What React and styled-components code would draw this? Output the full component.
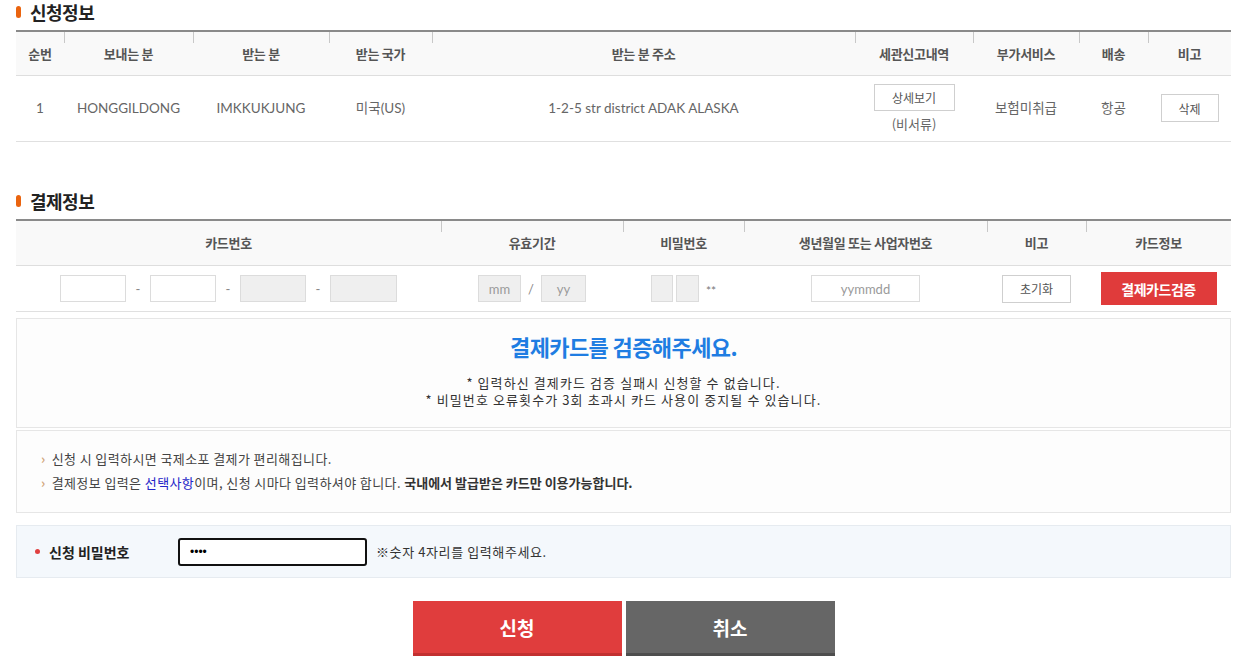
import React from "react";
import styled, { createGlobalStyle } from "styled-components";

const Global = createGlobalStyle`
  html, body { margin: 0; padding: 0; background: #fff; }
  body { font-family: "Lato", "Noto Sans CJK KR", sans-serif; color: #333; }
  * { box-sizing: border-box; }
`;

const Page = styled.div`
  width: 1215px;
  margin-left: 16px;
  padding-bottom: 14px;
`;

const SectionTitle = styled.h2`
  margin: ${(p) => (p.$first ? "0" : "47px")} 0 6px;
  display: flex;
  align-items: center;
  gap: 9px;
  font-family: "Noto Sans CJK KR", sans-serif;
  font-size: 18px;
  font-weight: 700;
  line-height: 24px;
  color: #222;
  letter-spacing: -0.5px;
  &::before {
    content: "";
    display: block;
    width: 5px;
    height: 12px;
    border-radius: 3px;
    background: #ea640f;
  }
`;

const Table = styled.table`
  width: 100%;
  border-collapse: collapse;
  table-layout: fixed;
  border-top: 2px solid #8a8a8a;
`;

const Th = styled.th`
  position: relative;
  height: ${(p) => p.$h || 43}px;
  background: #f9f9f9;
  border-bottom: 1px solid #dedede;
  font-family: "Noto Sans CJK KR", sans-serif;
  font-size: 13px;
  font-weight: 700;
  color: #555;
  text-align: center;
  padding: 0;
  letter-spacing: -0.3px;
  &::before {
    content: "";
    display: ${(p) => (p.$sep ? "block" : "none")};
    position: absolute;
    left: 0;
    top: 0;
    width: 1px;
    height: 11px;
    background: #c8c8c8;
  }
`;

const Td = styled.td`
  height: ${(p) => p.$h || 66}px;
  border-bottom: 1px solid #e0e0e0;
  font-size: 13.5px;
  color: #666;
  text-align: center;
  padding: 0;
  line-height: 18px;
`;

const SmallBtn = styled.button`
  width: ${(p) => p.$w}px;
  height: ${(p) => p.$h || 28}px;
  border: 1px solid #cfcfcf;
  background: #fff;
  font-family: "Noto Sans CJK KR", sans-serif;
  font-size: 12px;
  color: #555;
  padding: 0;
  cursor: pointer;
`;

const DetailCell = styled.div`
  display: flex;
  flex-direction: column;
  align-items: center;
  gap: 4px;
  padding-top: 1px;
`;

const Sub = styled.span`
  font-family: "Noto Sans CJK KR", sans-serif;
  font-size: 13px;
  color: #666;
`;

const InputRow = styled.div`
  display: flex;
  align-items: center;
  justify-content: center;
  gap: ${(p) => p.$gap || 0}px;
`;

const Field = styled.input`
  width: ${(p) => p.$w}px;
  height: 27px;
  border: 1px solid #dcdcdc;
  background: ${(p) => (p.$gray ? "#efefef" : "#fff")};
  font-family: "Lato", "Noto Sans CJK KR", sans-serif;
  font-size: 13px;
  color: #555;
  text-align: center;
  padding: 0;
  outline: none;
  &::placeholder { color: #9a9a9a; }
`;

const Sep = styled.span`
  width: ${(p) => p.$w}px;
  text-align: center;
  font-size: 13px;
  color: #888;
`;

const Stars = styled.span`
  margin-left: 4px;
  font-size: 12px;
  line-height: 12px;
  padding-top: 5px;
  color: #777;
`;

const RedBtn = styled.button`
  width: 116px;
  height: 33px;
  border: none;
  background: #e03b3b;
  color: #fff;
  font-family: "Noto Sans CJK KR", sans-serif;
  font-size: 14px;
  font-weight: 700;
  letter-spacing: -0.5px;
  padding: 0;
`;

const Box = styled.div`
  border: 1px solid #e6e6e6;
  background: #fdfdfd;
  margin-top: ${(p) => p.$mt}px;
  padding: ${(p) => p.$pad};
  text-align: ${(p) => p.$align || "left"};
  font-family: "Noto Sans CJK KR", sans-serif;
`;

const VerifyTitle = styled.div`
  font-size: 22px;
  font-weight: 700;
  line-height: 30px;
  color: #1f7de2;
  letter-spacing: -0.6px;
  margin-bottom: 13px;
`;

const NoteLine = styled.div`
  font-size: 13px;
  line-height: 17px;
  letter-spacing: 1.1px;
  color: #333;
`;

const InfoLine = styled.div`
  display: flex;
  align-items: center;
  gap: 6px;
  font-size: 13px;
  line-height: 24px;
  letter-spacing: 0.4px;
  color: #444;
  &::before {
    content: "›";
    color: #d2a77a;
    font-weight: 700;
    font-size: 13px;
  }
`;

const Link = styled.span`
  color: #2424c8;
`;

const Strong = styled.b`
  color: #333;
  font-weight: 700;
  letter-spacing: 0;
`;

const PwBox = styled.div`
  margin-top: 12px;
  height: 53px;
  border: 1px solid #e6ebf0;
  background: #f4f8fc;
  display: flex;
  align-items: center;
  padding-left: 18px;
  font-family: "Noto Sans CJK KR", sans-serif;
`;

const PwLabel = styled.label`
  width: 143px;
  display: flex;
  align-items: center;
  gap: 9px;
  font-size: 14px;
  font-weight: 700;
  color: #222;
  &::before {
    content: "";
    width: 5px;
    height: 5px;
    border-radius: 50%;
    background: #e04040;
  }
`;

const PwInput = styled.input`
  width: 189px;
  height: 28px;
  border: 2px solid #111;
  border-radius: 3px;
  background: #fff;
  padding: 0 10px;
  font-size: 12px;
  outline: none;
  letter-spacing: 0;
`;

const Hint = styled.span`
  margin-left: 9px;
  font-size: 13px;
  letter-spacing: 0.6px;
  color: #333;
`;

const Actions = styled.div`
  margin-top: 23px;
  display: flex;
  justify-content: center;
  gap: 4px;
`;

const BigBtn = styled.button`
  width: 209px;
  height: 55px;
  border: none;
  border-bottom: 3px solid ${(p) => (p.$red ? "#c23030" : "#4e4e4e")};
  background: ${(p) => (p.$red ? "#e03d3d" : "#666")};
  color: #fff;
  font-family: "Noto Sans CJK KR", sans-serif;
  font-size: 19px;
  font-weight: 700;
  padding: 0;
`;

const apCols = [48, 129, 136, 103, 423, 118, 106, 69, 83];
const apHead = ["순번", "보내는 분", "받는 분", "받는 국가", "받는 분 주소", "세관신고내역", "부가서비스", "배송", "비고"];
const payCols = [425, 182, 121, 243, 99, 145];
const payHead = ["카드번호", "유효기간", "비밀번호", "생년월일 또는 사업자번호", "비고", "카드정보"];

export default function App() {
  return (
    <Page>
      <Global />
      <SectionTitle $first>신청정보</SectionTitle>
      <Table>
        <colgroup>
          {apCols.map((w, i) => (
            <col key={i} style={{ width: w }} />
          ))}
        </colgroup>
        <thead>
          <tr>
            {apHead.map((h, i) => (
              <Th key={h} $sep={i > 0} $h={44}>{h}</Th>
            ))}
          </tr>
        </thead>
        <tbody>
          <tr>
            <Td>1</Td>
            <Td>HONGGILDONG</Td>
            <Td>IMKKUKJUNG</Td>
            <Td>미국(US)</Td>
            <Td>1-2-5 str district ADAK ALASKA</Td>
            <Td>
              <DetailCell>
                <SmallBtn $w={81} $h={27}>상세보기</SmallBtn>
                <Sub>(비서류)</Sub>
              </DetailCell>
            </Td>
            <Td>보험미취급</Td>
            <Td>항공</Td>
            <Td>
              <SmallBtn $w={58}>삭제</SmallBtn>
            </Td>
          </tr>
        </tbody>
      </Table>

      <SectionTitle>결제정보</SectionTitle>
      <Table>
        <colgroup>
          {payCols.map((w, i) => (
            <col key={i} style={{ width: w }} />
          ))}
        </colgroup>
        <thead>
          <tr>
            {payHead.map((h, i) => (
              <Th key={h} $sep={i > 0} $h={46}>{h}</Th>
            ))}
          </tr>
        </thead>
        <tbody>
          <tr>
            <Td $h={46}>
              <InputRow>
                <Field $w={66} />
                <Sep $w={24}>-</Sep>
                <Field $w={66} />
                <Sep $w={24}>-</Sep>
                <Field $w={66} $gray />
                <Sep $w={24}>-</Sep>
                <Field $w={67} $gray />
              </InputRow>
            </Td>
            <Td $h={46}>
              <InputRow>
                <Field $w={43} $gray placeholder="mm" />
                <Sep $w={20}>/</Sep>
                <Field $w={45} $gray placeholder="yy" />
              </InputRow>
            </Td>
            <Td $h={46}>
              <InputRow $gap={3}>
                <Field $w={22} $gray />
                <Field $w={23} $gray />
                <Stars>**</Stars>
              </InputRow>
            </Td>
            <Td $h={46}>
              <InputRow>
                <Field $w={109} placeholder="yymmdd" />
              </InputRow>
            </Td>
            <Td $h={46}>
              <SmallBtn $w={69}>초기화</SmallBtn>
            </Td>
            <Td $h={46}>
              <RedBtn>결제카드검증</RedBtn>
            </Td>
          </tr>
        </tbody>
      </Table>

      <Box $mt={6} $pad="12px 0 19px" $align="center">
        <VerifyTitle>결제카드를 검증해주세요.</VerifyTitle>
        <NoteLine>* 입력하신 결제카드 검증 실패시 신청할 수 없습니다.</NoteLine>
        <NoteLine>* 비밀번호 오류횟수가 3회 초과시 카드 사용이 중지될 수 있습니다.</NoteLine>
      </Box>

      <Box $mt={2} $pad="16px 24px 17px">
        <InfoLine>신청 시 입력하시면 국제소포 결제가 편리해집니다.</InfoLine>
        <InfoLine>
          <span>
            결제정보 입력은 <Link>선택사항</Link>이며, 신청 시마다 입력하셔야 합니다.{" "}
            <Strong>국내에서 발급받은 카드만 이용가능합니다.</Strong>
          </span>
        </InfoLine>
      </Box>

      <PwBox>
        <PwLabel>신청 비밀번호</PwLabel>
        <PwInput type="password" defaultValue="1234" />
        <Hint>※숫자 4자리를 입력해주세요.</Hint>
      </PwBox>

      <Actions>
        <BigBtn $red>신청</BigBtn>
        <BigBtn>취소</BigBtn>
      </Actions>
    </Page>
  );
}
